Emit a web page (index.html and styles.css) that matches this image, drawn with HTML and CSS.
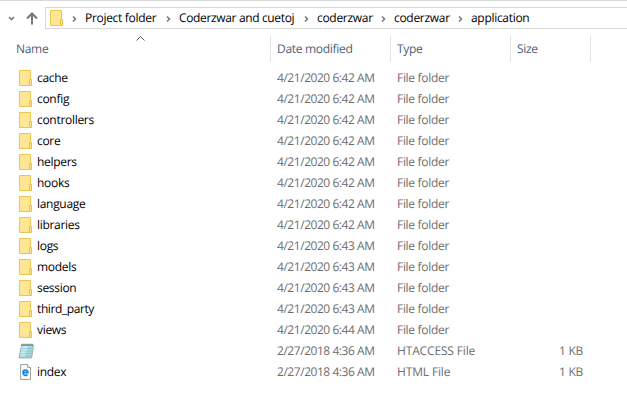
FILE: index.html
```html
<!DOCTYPE html>
<html lang="en">
<head>
<meta charset="utf-8">
<title>application</title>
<link rel="stylesheet" href="styles.css">
</head>
<body>
<svg width="0" height="0" class="defs" aria-hidden="true">
  <symbol id="folder" viewBox="0 0 13 16"><path d="M.5.5h11v15H.5z" fill="#ffe694" stroke="#ebc655"/><path d="M10.500 9.500h2v6h-2z" fill="#ffe694" stroke="#e8c04a"/></symbol>
  <symbol id="sep" viewBox="0 0 5 6"><path d="M1 .5 3.500 3 1 5.500" fill="none" stroke="#777" stroke-width="1.500"/></symbol>
  <symbol id="notepad" viewBox="0 0 16 16"><path d="M3.500 2h12l-1.800 13H1z" fill="#a5d5e0" stroke="#8fa5ab" stroke-width=".8"/><path d="M3.800 3H10L7 14H2z" fill="#c9edf3"/><path d="M3.300 5.500h11M3 8h11M2.600 10.500h11M2.200 13h11" stroke="#7dbccb" stroke-width=".6"/><path d="M3.500 1.700h12" stroke="#555" stroke-width="2" stroke-dasharray="1 1"/></symbol>
  <symbol id="html" viewBox="0 0 13 16"><path d="M1.500.5h7l3 3v12h-10z" fill="#fafafa" stroke="#a2a2a2"/><path d="M8.500.5v3h3" fill="#fff" stroke="#a2a2a2"/><path d="M4 8.600h4.900C8.700 5.300 4 5.300 4 8.600c0 3 3 3.200 4.600 2.200" fill="none" stroke="#1685dc" stroke-width="1.600"/></symbol>
</svg>
<main class="explorer">
  <nav class="bar">
    <svg class="recent" viewBox="0 0 7 5"><path d="m1 1 2.500 2.500L6 1" fill="none" stroke="#777" stroke-width="1.600"/></svg>
    <svg class="up" viewBox="0 0 12 13"><path d="M6 12.500V2M1 6.500l5-5 5 5" fill="none" stroke="#777" stroke-width="2"/></svg>
    <div class="address">
      <svg class="folder"><use href="#folder"/></svg>
      <svg class="sep"><use href="#sep"/></svg><span class="crumb project">Project folder</span>
      <svg class="sep"><use href="#sep"/></svg><span class="crumb parent">Coderzwar and cuetoj</span>
      <svg class="sep"><use href="#sep"/></svg><span class="crumb repo">coderzwar</span>
      <svg class="sep"><use href="#sep"/></svg><span class="crumb repo">coderzwar</span>
      <svg class="sep"><use href="#sep"/></svg><span class="crumb">application</span>
    </div>
  </nav>
  <header class="head">
    <div class="col name">Name<svg class="sort" viewBox="0 0 9 5"><path d="m.5 4.500 4-4 4 4" fill="none" stroke="#555"/></svg></div>
    <div class="col date">Date modified</div><div class="col">Type</div><div class="col">Size</div>
  </header>
  <section class="rows">
    <div class="row"><svg class="folder"><use href="#folder"/></svg><b>cache</b><time>4/21/2020 6:42 AM</time><span>File folder</span></div>
    <div class="row"><svg class="folder"><use href="#folder"/></svg><b>config</b><time>4/21/2020 6:42 AM</time><span>File folder</span></div>
    <div class="row"><svg class="folder"><use href="#folder"/></svg><b>controllers</b><time>4/21/2020 6:42 AM</time><span>File folder</span></div>
    <div class="row"><svg class="folder"><use href="#folder"/></svg><b>core</b><time>4/21/2020 6:42 AM</time><span>File folder</span></div>
    <div class="row"><svg class="folder"><use href="#folder"/></svg><b>helpers</b><time>4/21/2020 6:42 AM</time><span>File folder</span></div>
    <div class="row"><svg class="folder"><use href="#folder"/></svg><b>hooks</b><time>4/21/2020 6:42 AM</time><span>File folder</span></div>
    <div class="row"><svg class="folder"><use href="#folder"/></svg><b>language</b><time>4/21/2020 6:42 AM</time><span>File folder</span></div>
    <div class="row"><svg class="folder"><use href="#folder"/></svg><b>libraries</b><time>4/21/2020 6:42 AM</time><span>File folder</span></div>
    <div class="row"><svg class="folder"><use href="#folder"/></svg><b>logs</b><time>4/21/2020 6:43 AM</time><span>File folder</span></div>
    <div class="row"><svg class="folder"><use href="#folder"/></svg><b>models</b><time>4/21/2020 6:43 AM</time><span>File folder</span></div>
    <div class="row"><svg class="folder"><use href="#folder"/></svg><b>session</b><time>4/21/2020 6:43 AM</time><span>File folder</span></div>
    <div class="row"><svg class="folder"><use href="#folder"/></svg><b class="tight">third_party</b><time>4/21/2020 6:43 AM</time><span>File folder</span></div>
    <div class="row"><svg class="folder"><use href="#folder"/></svg><b>views</b><time>4/21/2020 6:44 AM</time><span>File folder</span></div>
    <div class="row"><svg class="notepad"><use href="#notepad"/></svg><b></b><time>2/27/2018 4:36 AM</time><span class="caps">HTACCESS File</span><span class="size">1 KB</span></div>
    <div class="row"><svg class="html"><use href="#html"/></svg><b>index</b><time>2/27/2018 4:36 AM</time><span class="caps">HTML File</span><span class="size">1 KB</span></div>
  </section>
</main>
</body>
</html>
```
FILE: styles.css
```css
* { box-sizing: border-box; }
body { margin: 0; background: #fff; color: #000; font: 12px/20px "Open Sans", "Noto Sans", sans-serif; letter-spacing: -.3px; text-rendering: geometricPrecision; overflow: hidden; }
svg { display: block; flex: none; }
.defs { position: absolute; }
.explorer { height: 404px; border-top: 1px solid #d9d9d9; }
.bar { display: flex; align-items: center; height: 35px; padding: 0 0 1px 8px; }
.recent { width: 7px; height: 5px; }
.up { width: 12px; height: 13px; margin: 0 7px 0 11px; }
.address { display: flex; align-items: center; flex: 1; height: 22px; padding-left: 4px; border: 1px solid #d9d9d9; border-right: 0; white-space: nowrap; }
.folder { width: 13px; height: 16px; }
.sep { width: 5px; height: 6px; margin: 1px 8px 0 9px; }
.crumb { flex: none; }
.project { width: 72px; }
.parent { width: 116px; letter-spacing: -.35px; }
.repo { width: 55px; }
.head { display: grid; grid-template-columns: 271px 120px 120px 80px; height: 25px; color: #4c607a; line-height: 26px; }
.col { padding-left: 6px; border-right: 1px solid #e2e2e2; }
.name { position: relative; padding-left: 16px; }
.sort { position: absolute; left: 136px; top: 0; width: 9px; height: 5px; }
.rows { padding-top: 6px; }
.row { display: grid; grid-template-columns: 18px 240px 120px 120px 66px; align-items: center; height: 21px; padding-left: 19px; white-space: nowrap; color: #6d6d6d; }
.row b { font-weight: 400; color: #000; }
.row .tight { letter-spacing: -.4px; }
.row time { letter-spacing: -.45px; }
.row .caps { letter-spacing: -.15px; }
.notepad { width: 16px; height: 16px; margin-left: -1px; }
.html { width: 13px; height: 16px; }
.size { text-align: right; }
```
